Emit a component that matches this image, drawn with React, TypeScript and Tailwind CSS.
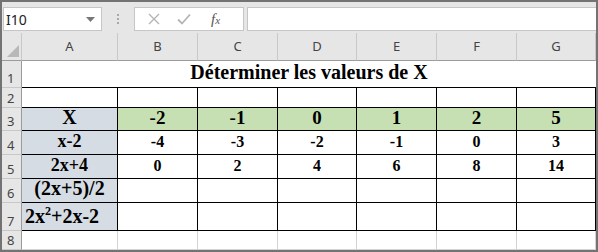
import React from 'react';

const cols = ['A', 'B', 'C', 'D', 'E', 'F', 'G'];

const xs = ['-2', '-1', '0', '1', '2', '5'];
const row4 = ['-4', '-3', '-2', '-1', '0', '3'];
const row5 = ['0', '2', '4', '6', '8', '14'];

const serif = { fontFamily: '"Liberation Serif", "Times New Roman", serif' };
const ui = { fontFamily: '"Noto Sans", "Open Sans", sans-serif' };

const RowHead = ({ n }: { n: number }) => (
  <div
    className="flex items-end pl-[5px] pb-[2px] bg-[#e6e6e6] border-r border-b border-r-[#9b9b9b] border-b-[#c8c8c8] text-[13px] leading-none text-[#444]"
    style={ui}
  >
    {n}
  </div>
);

const Cell = ({
  children,
  className = '',
}: {
  children?: React.ReactNode;
  className?: string;
}) => (
  <div className={`flex items-end justify-center border-r border-b border-black font-bold leading-none text-black ${className}`} style={serif}>
    <span>{children}</span>
  </div>
);

const App = () => {
  return (
    <div className="w-[598px] h-[252px] border-2 border-[#737373] bg-white overflow-hidden box-border">
      {/* formula bar */}
      <div className="h-[31px] bg-[#e6e6e6] flex items-start pt-[5px] pl-[1px]">
        <div className="w-[99px] h-[24px] bg-white border border-[#c6c6c6] flex items-center justify-between pl-[2px] pr-[6px]">
          <span className="text-[14px] text-[#222]" style={ui}>I10</span>
          <svg width="9" height="5" viewBox="0 0 9 5">
            <path d="M0 0 L9 0 L4.5 5 Z" fill="#777" />
          </svg>
        </div>
        <div className="w-[32px] h-[24px] flex flex-col items-center justify-center gap-[2px]">
          <span className="w-[2px] h-[2px] bg-[#a8a8a8]" />
          <span className="w-[2px] h-[2px] bg-[#a8a8a8]" />
          <span className="w-[2px] h-[2px] bg-[#a8a8a8]" />
        </div>
        <div className="w-[110px] h-[24px] bg-white border border-[#c6c6c6] flex items-center">
          <svg width="12" height="12" viewBox="0 0 12 12" className="ml-[13px]">
            <path d="M1 1 L11 11 M11 1 L1 11" stroke="#b5b5b5" strokeWidth="1.4" />
          </svg>
          <svg width="14" height="12" viewBox="0 0 14 12" className="ml-[17px]">
            <path d="M1 6.5 L5 10.5 L13 1.5" stroke="#b5b5b5" strokeWidth="1.8" fill="none" />
          </svg>
          <span className="ml-[20px] text-[15px] italic text-[#555]" style={serif}>
            f<span className="text-[11px]">x</span>
          </span>
        </div>
        <div className="ml-[3px] flex-1 h-[24px] bg-white border border-[#c6c6c6] border-r-0" />
      </div>

      {/* sheet */}
      <div className="grid grid-cols-[20px_96px_80px_80px_79px_80px_80px_79px] grid-rows-[28px_27px_20px_23px_24px_24px_24px_28px_19px]">
        {/* column headers */}
        <div className="bg-[#e6e6e6] border-r border-b border-r-[#c8c8c8] border-b-[#9b9b9b] flex items-end justify-end pr-[2px] pb-[3px]">
          <svg width="12" height="12" viewBox="0 0 12 12">
            <path d="M12 0 L12 12 L0 12 Z" fill="#b8b8b8" />
          </svg>
        </div>
        {cols.map((c) => (
          <div
            key={c}
            className="bg-[#e6e6e6] border-r border-b border-r-[#c8c8c8] border-b-[#9b9b9b] flex items-center justify-center pt-[1px] text-[13px] text-[#444]"
            style={ui}
          >
            {c}
          </div>
        ))}

        {/* row 1 */}
        <RowHead n={1} />
        <div
          className="col-span-7 flex items-end justify-center pb-[5px] border-b border-black text-[20px] font-bold leading-none text-black"
          style={serif}
        >
          Déterminer les valeurs de X
        </div>

        {/* row 2 */}
        <RowHead n={2} />
        {cols.map((c) => (
          <Cell key={c} />
        ))}

        {/* row 3 */}
        <RowHead n={3} />
        <Cell className="bg-[#d6dce4] text-[20px] pb-[3px]">X</Cell>
        {xs.map((v, i) => (
          <Cell key={i} className="bg-[#c6e0b4] text-[19px] pb-[3px]">{v}</Cell>
        ))}

        {/* row 4 */}
        <RowHead n={4} />
        <Cell className="bg-[#d6dce4] text-[18px] pb-[4px]">x-2</Cell>
        {row4.map((v, i) => (
          <Cell key={i} className="text-[16px] pb-[4px]">{v}</Cell>
        ))}

        {/* row 5 */}
        <RowHead n={5} />
        <Cell className="bg-[#d6dce4] text-[18px] pb-[4px]">2x+4</Cell>
        {row5.map((v, i) => (
          <Cell key={i} className="text-[16px] pb-[4px]">{v}</Cell>
        ))}

        {/* row 6 */}
        <RowHead n={6} />
        <Cell className="bg-[#d6dce4] text-[20px] pb-[4px]">(2x+5)/2</Cell>
        {xs.map((_, i) => (
          <Cell key={i} />
        ))}

        {/* row 7 */}
        <RowHead n={7} />
        <Cell className="bg-[#d6dce4] text-[20px] pb-[4px] !justify-start pl-[3px]">
          2x<sup className="text-[12px] top-[-8px]">2</sup>+2x-2
        </Cell>
        {xs.map((_, i) => (
          <Cell key={i} />
        ))}

        {/* row 8 */}
        <RowHead n={8} />
        {cols.map((c) => (
          <div key={c} className="border-r border-b border-[#d4d4d4]" />
        ))}
      </div>
    </div>
  );
};

export default App;
